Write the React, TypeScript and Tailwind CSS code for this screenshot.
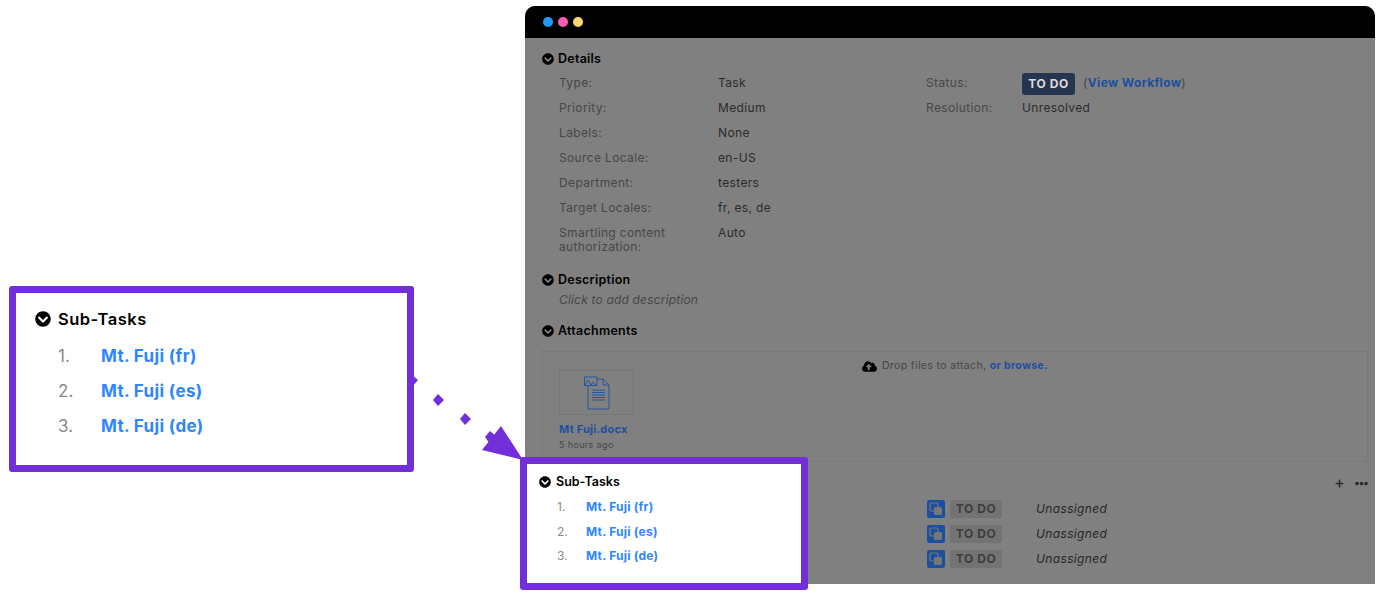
import { FaChevronCircleDown, FaCloudUploadAlt, FaEllipsisH, FaPlus } from "react-icons/fa";

const leftFields = [
  ["Type:", "Task"],
  ["Priority:", "Medium"],
  ["Labels:", "None"],
  ["Source Locale:", "en-US"],
  ["Department:", "testers"],
  ["Target Locales:", "fr, es, de"],
  ["Smartling content authorization:", "Auto"],
];
const subTasks = ["Mt. Fuji (fr)", "Mt. Fuji (es)", "Mt. Fuji (de)"];

function Heading({ title }: { title: string }) {
  return (
    <div className="flex h-4 items-center gap-1 text-[12.5px] font-semibold tracking-[0.02em] text-black">
      <FaChevronCircleDown className="h-3 w-3" />
      <span>{title}</span>
    </div>
  );
}

function DocIcon() {
  return (
    <svg width="26" height="34" viewBox="0 0 26 34" fill="none" stroke="#1d4f9f" strokeWidth="0.9">
      <path d="M4 9v24h21V9l-6-6h-6" />
      <path d="M19 3v6h6" />
      <rect x="0.5" y="1" width="12.5" height="8.5" />
      <path d="M1 9l3-5 3 5 2-3 3 3" />
      <path d="M8 14h13M8 16.5h13M8 19h13M8 21.5h13M8 24h13" />
    </svg>
  );
}

function SubTaskIcon() {
  return (
    <div className="flex h-[18px] w-[18px] items-center justify-center rounded-[2px] bg-[#1d4f9f]">
      <svg width="14" height="14" viewBox="0 0 14 14">
        <rect x="1" y="1" width="8" height="8" rx="1.5" fill="none" stroke="#777" strokeWidth="1.2" />
        <rect x="5" y="5" width="8" height="8" rx="1.5" fill="#777" />
      </svg>
    </div>
  );
}

function Arrow() {
  return (
    <svg className="absolute left-[400px] top-[365px]" width="130" height="100" viewBox="400 365 130 100" fill="#722ed9">
      <polygon points="412,375 418,380 412,387 408,380" />
      <polygon points="438,394 444,400 438,406 433,400" />
      <polygon points="465,413 471,419 465,425 460,419" />
      <polygon points="490,431 497,437 490,444 485,437" />
      <polygon points="501,426 523,460 482,450" />
    </svg>
  );
}

function Highlight({ big }: { big?: boolean }) {
  return (
    <div
      className={
        big
          ? "absolute left-[9px] top-[286px] h-[186px] w-[405px] rounded-[3px] border-[7px] border-[#722ed9] bg-white pl-[19px] pt-[17px]"
          : "absolute left-[520px] top-[457px] h-[133px] w-[288px] rounded-[3px] border-[7px] border-[#722ed9] bg-white pl-[12px] pt-[10px]"
      }
    >
      <div className={big ? "flex h-[18px] items-center gap-[7px] text-[16.5px] font-semibold tracking-[0.03em] text-black" : "flex h-4 items-center gap-[5px] text-[12.5px] font-semibold text-black"}>
        <FaChevronCircleDown className={big ? "h-4 w-4" : "h-3 w-3"} />
        <span>Sub-Tasks</span>
      </div>
      <div className={big ? "mt-[11px] flex flex-col" : "mt-[5px] flex flex-col"}>
        {subTasks.map((task, index) => (
          <div key={task} className={big ? "flex h-[35px] items-center pl-[23px] text-[17px]" : "flex h-[24.5px] items-center pl-[18px] text-[12px]"}>
            <span className={big ? "w-[43px] text-[#8a8a8a]" : "w-[29px] text-[#8a8a8a]"}>{index + 1}.</span>
            <span className="font-bold tracking-[0.02em] text-[#2e86ff]">{task}</span>
          </div>
        ))}
      </div>
    </div>
  );
}

export default function App() {
  return (
    <div className="relative h-[599px] w-[1388px] overflow-hidden bg-white pl-[525px] pt-[6px] font-['Inter',sans-serif]">
      <div className="w-[850px] overflow-hidden rounded-t-[10px] bg-[#808080] text-[12px] tracking-[0.03em]">
        <div className="flex h-8 items-center gap-[5px] bg-black pl-[18px]">
          <span className="h-[10px] w-[10px] rounded-full bg-[#1f9bff]" />
          <span className="h-[10px] w-[10px] rounded-full bg-[#ff5cb8]" />
          <span className="h-[10px] w-[10px] rounded-full bg-[#ffd873]" />
        </div>

        <div className="pl-[17px] pr-[7px] pt-[13px]">
          <Heading title="Details" />
          <div className="mt-1 flex">
            <div className="w-[384px] pl-[17px]">
              {leftFields.map(([label, value]) => (
                <div key={label} className="flex pb-[6px] pt-[5px] leading-[14px]">
                  <span className="w-[159px] pr-[20px] text-[#474747]">{label}</span>
                  <span className="text-[#2b2b2b]">{value}</span>
                </div>
              ))}
            </div>
            <div>
              <div className="flex h-[25px] items-center">
                <span className="mb-[2px] w-[96px] text-[#474747]">Status:</span>
                <span className="flex h-[22px] w-[53px] items-center justify-center rounded-[3px] bg-[#273450] text-[12px] font-bold tracking-[0.05em] text-[#dcdcdc]">TO DO</span>
                <span className="mb-[2px] ml-2 text-[#474747]">
                  (<span className="font-bold text-[#1d4f9f]">View Workflow</span>)
                </span>
              </div>
              <div className="flex h-[25px] items-center">
                <span className="mb-[2px] w-[96px] text-[#474747]">Resolution:</span>
                <span className="mb-[2px] text-[#2b2b2b]">Unresolved</span>
              </div>
            </div>
          </div>

          <div className="mt-3">
            <Heading title="Description" />
          </div>
          <div className="mt-1 pl-[17px] italic leading-4 tracking-[0.015em] text-[#474747]">Click to add description</div>

          <div className="mt-[15px]">
            <Heading title="Attachments" />
          </div>
          <div className="mt-3 h-[111px] border border-dotted border-[#737373] pl-4 pt-[10px]">
            <div className="flex h-2 items-center justify-center gap-[5px] pr-4 text-[10.5px] text-[#474747]">
              <FaCloudUploadAlt className="h-[15px] w-[15px] shrink-0 text-black" />
              <span>
                Drop files to attach, <span className="font-bold text-[#1d4f9f]">or browse.</span>
              </span>
            </div>
            <div className="flex h-[45px] w-[75px] items-center justify-center border border-[#767676]">
              <DocIcon />
            </div>
            <div className="mt-[6px] text-[11px] font-bold leading-4 tracking-[0.02em] text-[#1d4f9f]">Mt Fuji.docx</div>
            <div className="mt-px text-[9px] leading-[14px] text-[#474747]">5 hours ago</div>
          </div>

          <div className="mt-[13px] flex h-4 items-center justify-end gap-[11px] text-[#2b2b2b]">
            <FaPlus className="h-[9px] w-[9px]" />
            <FaEllipsisH className="h-[13px] w-[13px]" />
          </div>
          <div className="mt-[9px] flex flex-col gap-[7px] pb-4 pl-[385px]">
            {subTasks.map((task) => (
              <div key={task} className="flex h-[18px] items-center">
                <SubTaskIcon />
                <span className="ml-[5px] flex h-[18px] w-[52px] items-center justify-center rounded-[2px] bg-[#737373] text-[12px] font-bold tracking-[0.05em] text-[#3d3d3d]">TO DO</span>
                <span className="ml-[34px] italic text-[#262626]">Unassigned</span>
              </div>
            ))}
          </div>
        </div>
      </div>

      <Arrow />
      <Highlight big />
      <Highlight />
    </div>
  );
}
